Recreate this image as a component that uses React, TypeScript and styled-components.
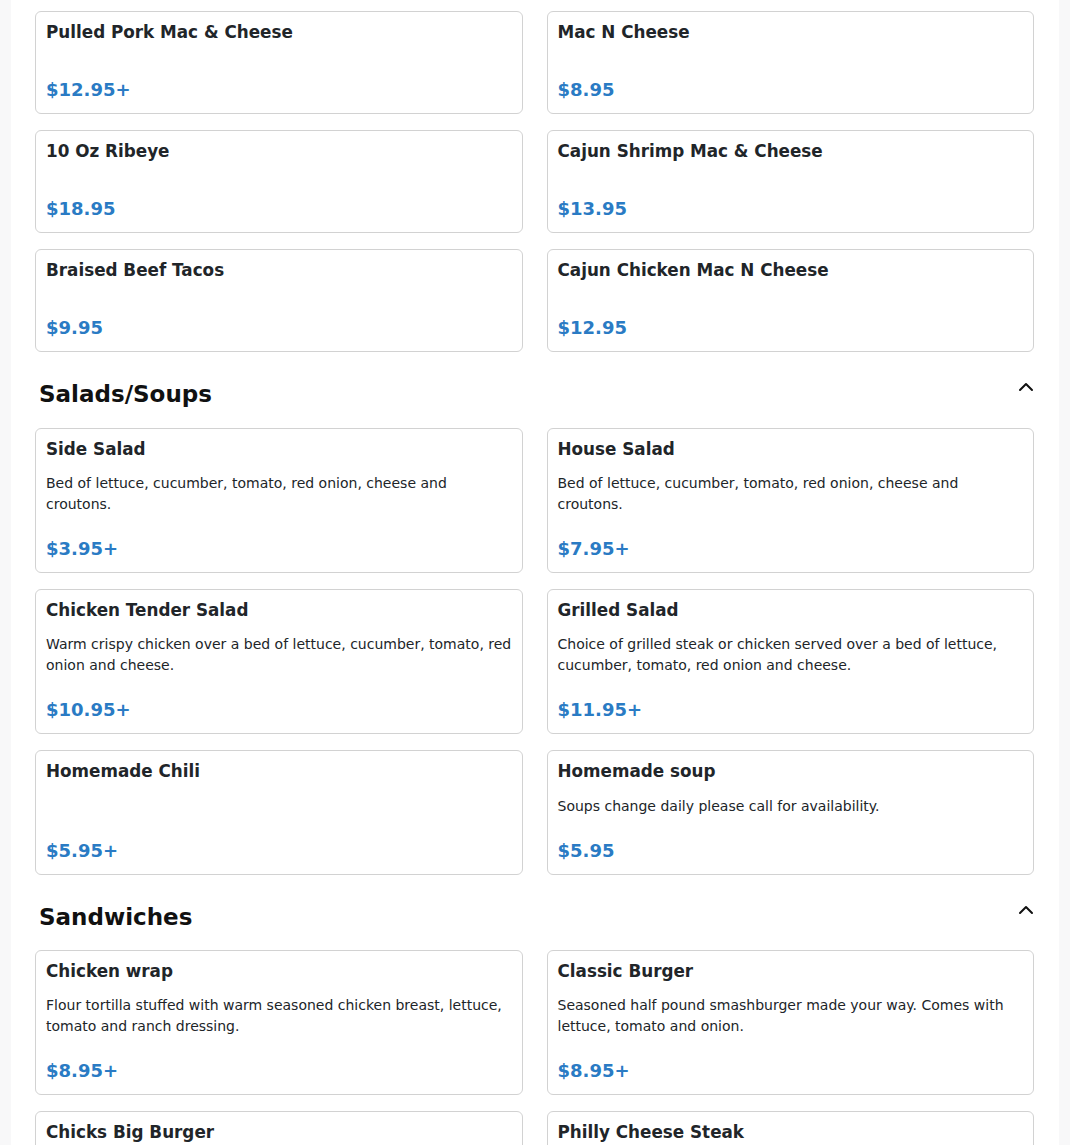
import React from "react";
import styled, { createGlobalStyle } from "styled-components";
import { ChevronUp } from "lucide-react";

type TMenuItem = {
  name: string;
  description?: string;
  price: string;
};

type TSection = {
  title?: string;
  items: TMenuItem[];
};

const PRICE_BLUE = "#2a7bc4";
const TEXT_DARK = "#212529";

const sections: TSection[] = [
  {
    items: [
      { name: "Pulled Pork Mac & Cheese", price: "$12.95+" },
      { name: "Mac N Cheese", price: "$8.95" },
      { name: "10 Oz Ribeye", price: "$18.95" },
      { name: "Cajun Shrimp Mac & Cheese", price: "$13.95" },
      { name: "Braised Beef Tacos", price: "$9.95" },
      { name: "Cajun Chicken Mac N Cheese", price: "$12.95" },
    ],
  },
  {
    title: "Salads/Soups",
    items: [
      {
        name: "Side Salad",
        description:
          "Bed of lettuce, cucumber, tomato, red onion, cheese and croutons.",
        price: "$3.95+",
      },
      {
        name: "House Salad",
        description:
          "Bed of lettuce, cucumber, tomato, red onion, cheese and croutons.",
        price: "$7.95+",
      },
      {
        name: "Chicken Tender Salad",
        description:
          "Warm crispy chicken over a bed of lettuce, cucumber, tomato, red onion and cheese.",
        price: "$10.95+",
      },
      {
        name: "Grilled Salad",
        description:
          "Choice of grilled steak or chicken served over a bed of lettuce, cucumber, tomato, red onion and cheese.",
        price: "$11.95+",
      },
      { name: "Homemade Chili", price: "$5.95+" },
      {
        name: "Homemade soup",
        description: "Soups change daily please call for availability.",
        price: "$5.95",
      },
    ],
  },
  {
    title: "Sandwiches",
    items: [
      {
        name: "Chicken wrap",
        description:
          "Flour tortilla stuffed with warm seasoned chicken breast, lettuce, tomato and ranch dressing.",
        price: "$8.95+",
      },
      {
        name: "Classic Burger",
        description:
          "Seasoned half pound smashburger made your way. Comes with lettuce, tomato and onion.",
        price: "$8.95+",
      },
      { name: "Chicks Big Burger", price: "$10.95+" },
      { name: "Philly Cheese Steak", price: "$10.95+" },
    ],
  },
];

const GlobalStyle = createGlobalStyle`
  html, body {
    margin: 0;
    padding: 0;
    overflow: hidden;
    background: #f8f8f9;
  }
  body {
    font-family: "DejaVu Sans", "Liberation Sans", sans-serif;
    color: ${TEXT_DARK};
  }
  * {
    box-sizing: border-box;
  }
`;

const Page = styled.main`
  max-width: 1048px;
  margin: 0 auto;
  min-height: 1145px;
  background: #ffffff;
  padding: 11px 25px 0 24px;
`;

const Section = styled.section`
  display: flex;
  flex-direction: column;
`;

const SectionHeader = styled.header`
  display: flex;
  justify-content: space-between;
  align-items: flex-start;
  padding: 23px 0 19px 4px;
`;

const SectionTitle = styled.h2`
  margin: 6px 0 0;
  font-size: 23px;
  line-height: 1.2;
  font-weight: 700;
  color: #111111;
`;

const ToggleButton = styled.button`
  display: flex;
  align-items: center;
  justify-content: center;
  width: 24px;
  height: 24px;
  margin-right: -4px;
  padding: 0;
  border: none;
  background: none;
  color: #111111;
  cursor: pointer;
`;

const Grid = styled.ul`
  display: grid;
  grid-template-columns: 1fr 1fr;
  column-gap: 24px;
  row-gap: 16px;
  margin: 0;
  padding: 0;
  list-style: none;
`;

const Card = styled.li`
  display: flex;
  flex-direction: column;
  padding: 10px;
  border: 1px solid #d2d2d2;
  border-radius: 6px;
  background: #ffffff;
`;

const ItemName = styled.h3`
  margin: 0 0 14px;
  font-size: 16.8px;
  line-height: 1.2;
  font-weight: 700;
  color: ${TEXT_DARK};
`;

const ItemDescription = styled.p`
  margin: 0 0 20px;
  font-size: 14px;
  line-height: 21px;
  color: ${TEXT_DARK};
`;

const ItemPrice = styled.span`
  margin-top: auto;
  font-size: 18px;
  line-height: 27px;
  font-weight: 700;
  color: ${PRICE_BLUE};
`;

const MenuCard = ({ item }: { item: TMenuItem }) => (
  <Card>
    <ItemName>{item.name}</ItemName>
    <ItemDescription>{item.description}</ItemDescription>
    <ItemPrice>{item.price}</ItemPrice>
  </Card>
);

const App = () => {
  return (
    <>
      <GlobalStyle />
      <Page>
        {sections.map((section, i) => (
          <Section key={section.title ?? i}>
            {section.title && (
              <SectionHeader>
                <SectionTitle>{section.title}</SectionTitle>
                <ToggleButton aria-label="Collapse section">
                  <ChevronUp size={24} strokeWidth={2} />
                </ToggleButton>
              </SectionHeader>
            )}
            <Grid>
              {section.items.map((item) => (
                <MenuCard key={item.name} item={item} />
              ))}
            </Grid>
          </Section>
        ))}
      </Page>
    </>
  );
};

export default App;
